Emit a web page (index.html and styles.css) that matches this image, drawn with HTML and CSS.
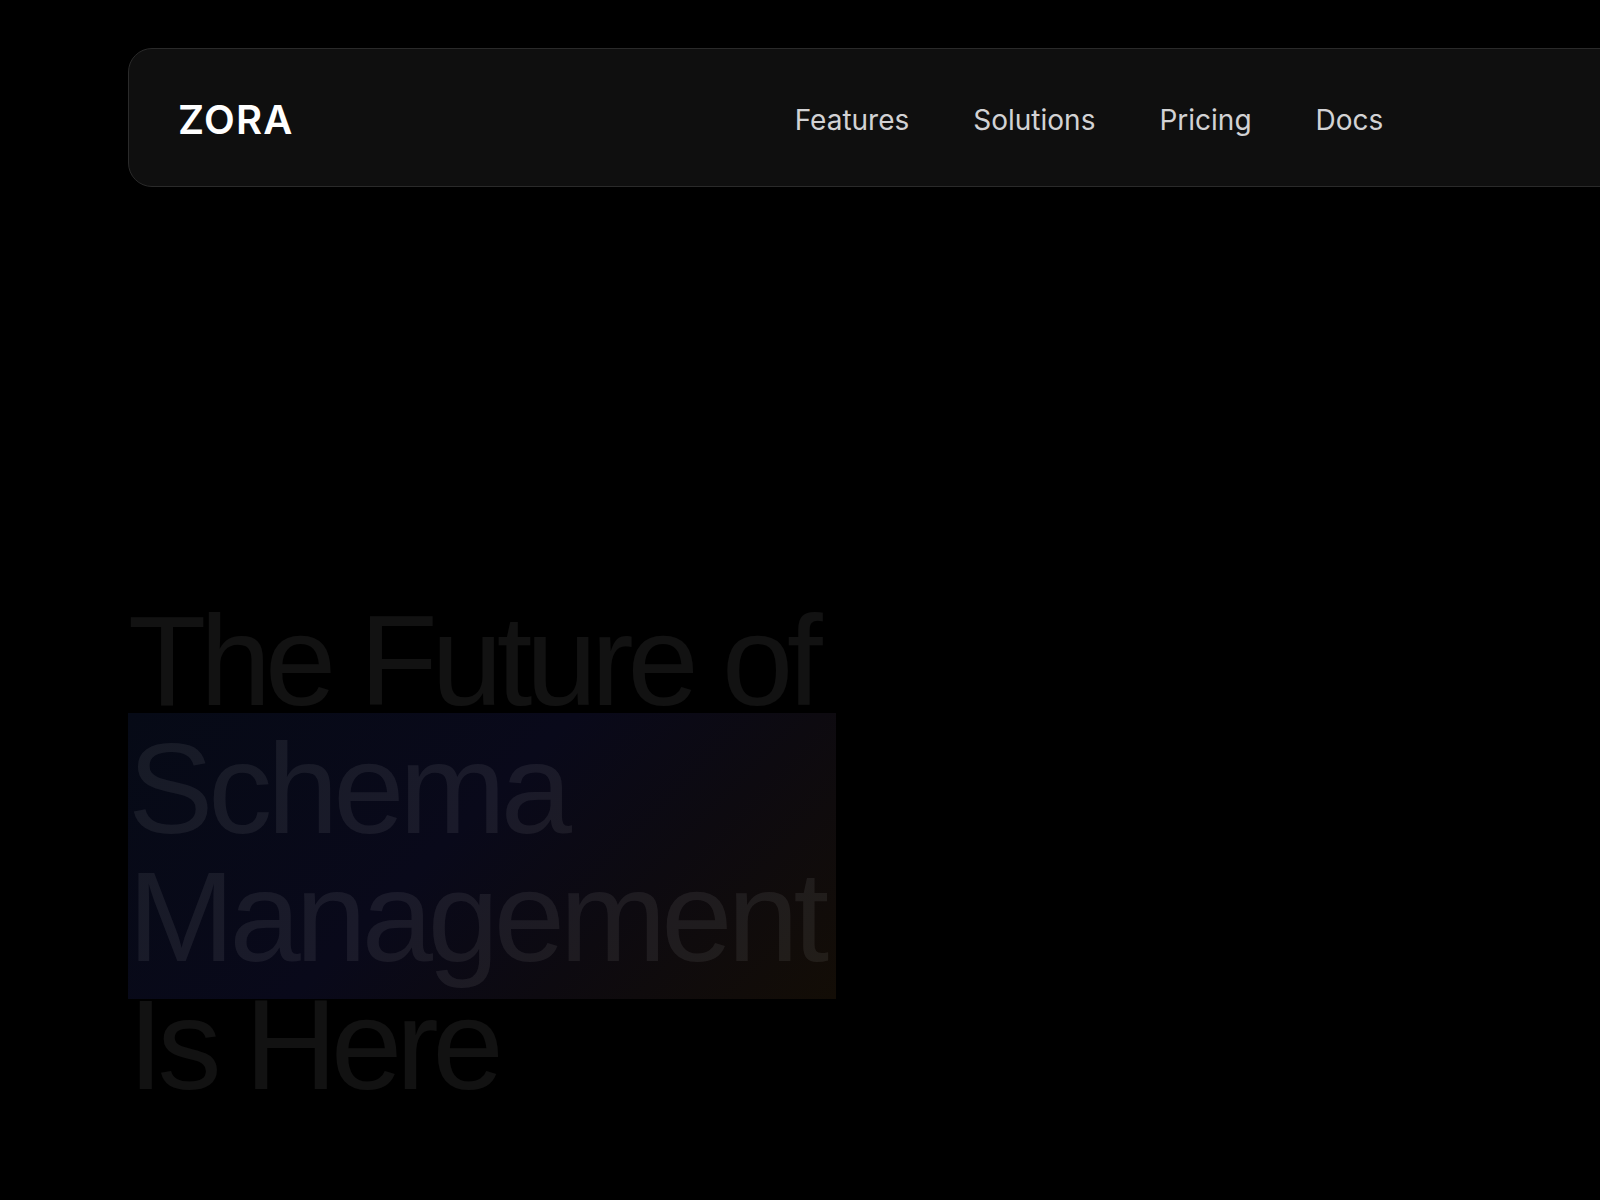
FILE: index.html
```html
<!DOCTYPE html>
<html lang="en">
<head>
    <meta charset="UTF-8">
    <meta name="viewport" content="width=device-width, initial-scale=1.0">
    <title>Zora</title>
    <link rel="stylesheet" href="styles.css">
</head>
<body>

<div class="page">
    <nav class="topbar">
        <a href="#" class="logo">ZORA</a>
        <div class="links">
            <a href="#features">Features</a>
            <a href="#solutions">Solutions</a>
            <a href="#pricing">Pricing</a>
            <a href="#docs">Docs</a>
        </div>
        <div class="spacer"></div>
    </nav>

    <section class="hero">
        <h1 class="title">The Future of<br><span class="accent">Schema<br>Management</span><br>Is Here</h1>
    </section>
</div>

</body>
</html>
```

FILE: styles.css
```css
body {
    margin: 0;
    padding: 0;
    background: #000;
    color: #fff;
    font-family: Inter, "Noto Sans", sans-serif;
    overflow: hidden;
    min-height: 100vh;
}

.page {
    padding: 48px 0 0 128px;
}

.topbar {
    box-sizing: border-box;
    width: 1922px;
    height: 139px;
    padding: 4px 48px 0;
    display: grid;
    grid-template-columns: 1fr auto 1fr;
    align-items: center;
    background: #0f0f0f;
    border: 1px solid #2a2a2a;
    border-radius: 24px;
}

.logo {
    justify-self: start;
    font-size: 40px;
    font-weight: 600;
    color: #fff;
    text-decoration: none;
    letter-spacing: 0.03em;
    padding-left: 1px;
}

.links {
    display: flex;
    gap: 64px;
}

.links a {
    font-size: 28px;
    color: #d2d2d4;
    text-decoration: none;
}

.hero {
    padding-top: 410px;
}

.title {
    margin: 0;
    font-family: "Liberation Sans", Arial, sans-serif;
    font-size: 128px;
    font-weight: 400;
    line-height: 1;
    letter-spacing: -0.048em;
    color: rgba(255, 255, 255, 0.07);
}

.accent {
    display: inline-block;
    padding: 12px 12px 18px 0;
    margin: -12px 0 -18px;
    letter-spacing: -0.04em;
    background: linear-gradient(135deg, #060a16 0%, #09091a 45%, #0d0a10 70%, #130d06 100%);
}
```
